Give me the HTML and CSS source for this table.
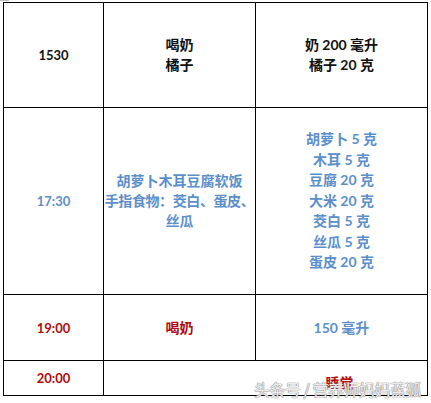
FILE: index.html
```html
<!DOCTYPE html>
<html lang="zh">
<head>
<meta charset="utf-8">
<link rel="stylesheet" href="styles.css">
</head>
<body>
<div class="corner"></div>
<div class="wrap">
<table class="menu">
  <colgroup>
    <col class="c1"><col class="c2"><col class="c3">
  </colgroup>
  <tr class="r1">
    <td class="time black">1530</td>
    <td class="black">喝奶<br>橘子</td>
    <td class="black">奶 200 毫升<br>橘子 20 克</td>
  </tr>
  <tr class="r2">
    <td class="time blue">17:30</td>
    <td class="blue">胡萝卜木耳豆腐软饭<br><span class="tight">手指食物：茭白、蛋皮、</span><br>丝瓜</td>
    <td class="blue list">胡萝卜 5 克<br>木耳 5 克<br>豆腐 20 克<br>大米 20 克<br>茭白 5 克<br>丝瓜 5 克<br>蛋皮 20 克</td>
  </tr>
  <tr class="r3">
    <td class="time red">19:00</td>
    <td class="red">喝奶</td>
    <td class="blue">150 毫升</td>
  </tr>
  <tr class="r4">
    <td class="time red">20:00</td>
    <td class="red sleep" colspan="2"><span class="sleep-text">睡觉</span></td>
  </tr>
</table>
<div class="watermark">头条号 / 营养师妈妈蓝狐</div>
</div>
</body>
</html>
```

FILE: styles.css
```css
html, body {
  margin: 0;
  padding: 0;
  background: #ffffff;
}
body {
  width: 431px;
  height: 403px;
  overflow: hidden;
  position: relative;
}
.corner {
  position: absolute;
  left: 0;
  top: 0;
  width: 9px;
  height: 1px;
  background: #bbbbbb;
}
.wrap {
  position: relative;
  padding: 2px 0 0 3px;
}
.menu {
  border-collapse: collapse;
  width: 424px;
  table-layout: fixed;
  font-family: Lato, "Noto Sans CJK SC", sans-serif;
  font-weight: 700;
  font-size: 14px;
  line-height: 20px;
}
.c1 { width: 100px; }
.c2 { width: 152px; }
.c3 { width: 172px; }
.menu td {
  border: 1.5px solid #000000;
  text-align: center;
  vertical-align: middle;
  padding: 0;
}
.r1 { height: 105px; }
.r2 { height: 187px; }
.r3 { height: 66px; }
.r4 { height: 35px; }
.time { font-size: 13px; }
.black { color: #111111; }
.blue { color: #5b8fcb; }
.red { color: #b00a0a; }
.list { line-height: 20.6px; padding-bottom: 2px; }
.tight { letter-spacing: -0.4px; white-space: nowrap; }
.sleep { text-align: left; vertical-align: top; }
.sleep-text {
  display: inline-block;
  margin-left: 148px;
  margin-top: 9px;
}
.watermark {
  position: absolute;
  left: 254px;
  top: 379px;
  font-family: "Noto Sans CJK SC", sans-serif;
  font-size: 16px;
  line-height: 20px;
  color: rgba(255, 255, 255, 0.85);
  text-shadow: 0 0 1px #888, 0 0 1px #888, 0 0 1px #999;
  letter-spacing: -0.5px;
  white-space: nowrap;
}
```
